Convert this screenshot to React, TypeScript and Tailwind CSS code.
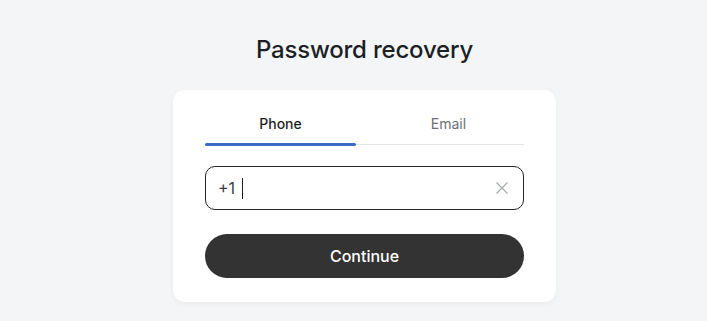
import { useState } from "react";

export default function App() {
  const [tab, setTab] = useState<"phone" | "email">("phone");

  return (
    <div
      className="min-h-[321px] w-full bg-[#f4f5f7] pl-[22px] flex flex-col items-center"
      style={{ fontFamily: "Inter, 'Noto Sans', sans-serif" }}
    >
      <h1 className="mt-[34px] text-[24px] leading-[32px] font-medium text-[#1c1f24] tracking-[-0.2px]">
        Password recovery
      </h1>

      <div className="mt-[24px] w-[383px] bg-white rounded-[12px] shadow-[0_2px_6px_rgba(0,0,0,0.04)] px-[32px] pt-[16px] pb-[24px]">
        <div className="flex gap-[17px] border-b border-[#e3e5e8]">
          <button
            onClick={() => setTab("phone")}
            className={`relative flex-1 h-[38px] pb-[4px] text-[14px] ${tab === "phone" ? "text-[#1c1f24] font-medium" : "text-[#6b6f76]"}`}
          >
            Phone
            {tab === "phone" && (
              <span className="absolute left-0 right-0 -bottom-[2px] h-[3px] rounded-full bg-[#3a6cc6]" />
            )}
          </button>
          <button
            onClick={() => setTab("email")}
            className={`relative flex-1 h-[38px] pb-[4px] text-[14px] ${tab === "email" ? "text-[#1c1f24] font-medium" : "text-[#6b6f76]"}`}
          >
            Email
            {tab === "email" && (
              <span className="absolute left-0 right-0 -bottom-[2px] h-[3px] rounded-full bg-[#3a6cc6]" />
            )}
          </button>
        </div>

        <div className="mt-[21px] h-[44px] flex items-center border border-[#1f2227] rounded-[10px] pl-[12px] pr-[14px]">
          <div className="flex-1 flex items-center text-[16px] text-[#3a3d42]">
            <span>+1</span>
            <span className="ml-[7px] w-[1px] h-[21px] bg-[#1c1f24]" />
          </div>
          <button className="text-[#a9acb1]" aria-label="clear">
            <svg width="14" height="14" viewBox="0 0 14 14" fill="none" stroke="currentColor" strokeWidth="1.3">
              <path d="M1.5 1.5L12.5 12.5M12.5 1.5L1.5 12.5" />
            </svg>
          </button>
        </div>

        <button className="mt-[24px] w-full h-[44px] rounded-full bg-[#333333] text-white text-[16px] font-medium">
          Continue
        </button>
      </div>
    </div>
  );
}
